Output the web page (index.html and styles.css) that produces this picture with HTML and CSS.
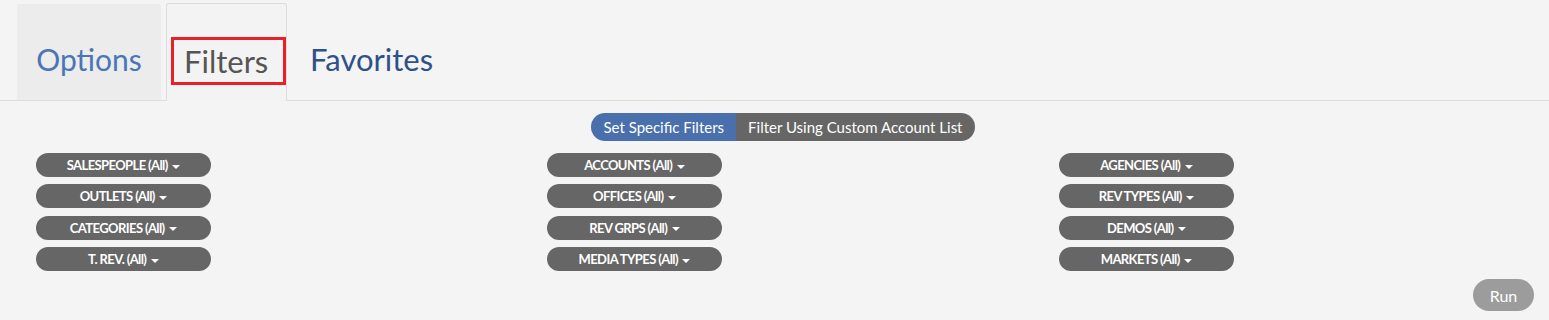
FILE: index.html
```html
<!DOCTYPE html>
<html>
<head>
    <meta charset="UTF-8">
    <title>Report Filters</title>
    <link rel="stylesheet" href="styles.css">
</head>
<body>
    <div class="tabs">
        <div class="tab tab-options">Options</div>
        <div class="tab tab-filters"><span class="marked">Filters</span></div>
        <div class="tab tab-favorites">Favorites</div>
    </div>

    <div class="panel">
        <div class="toggle">
            <span class="toggle-item active">Set Specific Filters</span>
            <span class="toggle-item">Filter Using Custom Account List</span>
        </div>

        <div class="filter-grid">
            <div class="filter-col">
                <button class="pill">SALESPEOPLE (All) <span class="caret"></span></button>
                <button class="pill">OUTLETS (All) <span class="caret"></span></button>
                <button class="pill">CATEGORIES (All) <span class="caret"></span></button>
                <button class="pill">T. REV. (All) <span class="caret"></span></button>
            </div>
            <div class="filter-col">
                <button class="pill">ACCOUNTS (All) <span class="caret"></span></button>
                <button class="pill">OFFICES (All) <span class="caret"></span></button>
                <button class="pill">REV GRPS (All) <span class="caret"></span></button>
                <button class="pill">MEDIA TYPES (All) <span class="caret"></span></button>
            </div>
            <div class="filter-col">
                <button class="pill">AGENCIES (All) <span class="caret"></span></button>
                <button class="pill">REV TYPES (All) <span class="caret"></span></button>
                <button class="pill">DEMOS (All) <span class="caret"></span></button>
                <button class="pill">MARKETS (All) <span class="caret"></span></button>
            </div>
        </div>

        <div class="actions">
            <button class="run">Run</button>
        </div>
    </div>
</body>
</html>
```

FILE: styles.css
```css
body {
    margin: 0;
    background: #f4f4f4;
    font-family: Lato, "Open Sans", sans-serif;
}
.tabs {
    display: flex;
    align-items: flex-end;
    padding: 3px 0 0 17px;
    border-bottom: 1px solid #dddddd;
    height: 97px;
}
.tab {
    font-size: 30px;
    line-height: 36px;
    box-sizing: border-box;
}
.tab-options {
    width: 144px;
    height: 96px;
    padding-top: 37px;
    text-align: center;
    background: #ececec;
    color: #4a76b8;
    border-radius: 3px 3px 0 0;
    margin-right: 5px;
}
.tab-filters {
    height: 98px;
    width: 121px;
    padding: 33px 0 0 4px;
    background: #f3f3f3;
    border: 1px solid #dddddd;
    border-bottom: none;
    border-radius: 3px 3px 0 0;
    margin-bottom: -1px;
    color: #555555;
}
.marked {
    display: block;
    width: 115px;
    height: 48px;
    box-sizing: border-box;
    border: 3px solid #e8202a;
    padding: 3px 0 0 10px;
    font-size: 31px;
}
.tab-favorites {
    height: 96px;
    padding: 37px 0 0 23px;
    color: #2d5189;
    font-size: 31px;
}
.panel {
    padding: 12px 0 0 17px;
}
.toggle {
    display: flex;
    justify-content: center;
}
.toggle-item {
    background: #666666;
    color: #ffffff;
    font-size: 15px;
    line-height: 28px;
    padding: 0 12px;
}
.toggle-item.active {
    background: #4a6fad;
    border-radius: 14px 0 0 14px;
}
.toggle-item:last-child {
    border-radius: 0 14px 14px 0;
}
.filter-grid {
    display: grid;
    grid-template-columns: 511px 512px 1fr;
    margin-top: 12px;
}
.filter-col {
    display: flex;
    flex-direction: column;
    gap: 7.4px;
    padding-left: 19px;
}
.pill {
    width: 175px;
    height: 24px;
    border: none;
    border-radius: 12px;
    background: #666666;
    color: #ffffff;
    font-family: Lato, sans-serif;
    font-weight: bold;
    font-size: 13px;
    letter-spacing: -0.6px;
    padding: 0;
    cursor: pointer;
}
.caret {
    display: inline-block;
    width: 0;
    height: 0;
    border-left: 4px solid transparent;
    border-right: 4px solid transparent;
    border-top: 4px solid #ffffff;
    vertical-align: middle;
    margin-left: 2px;
}
.actions {
    display: flex;
    justify-content: flex-end;
    padding: 8px 15px 0 0;
}
.run {
    width: 61px;
    height: 32px;
    border: none;
    border-radius: 16px;
    background: #9c9c9c;
    color: #ffffff;
    font-family: Lato, sans-serif;
    font-size: 16px;
    cursor: pointer;
}
```
